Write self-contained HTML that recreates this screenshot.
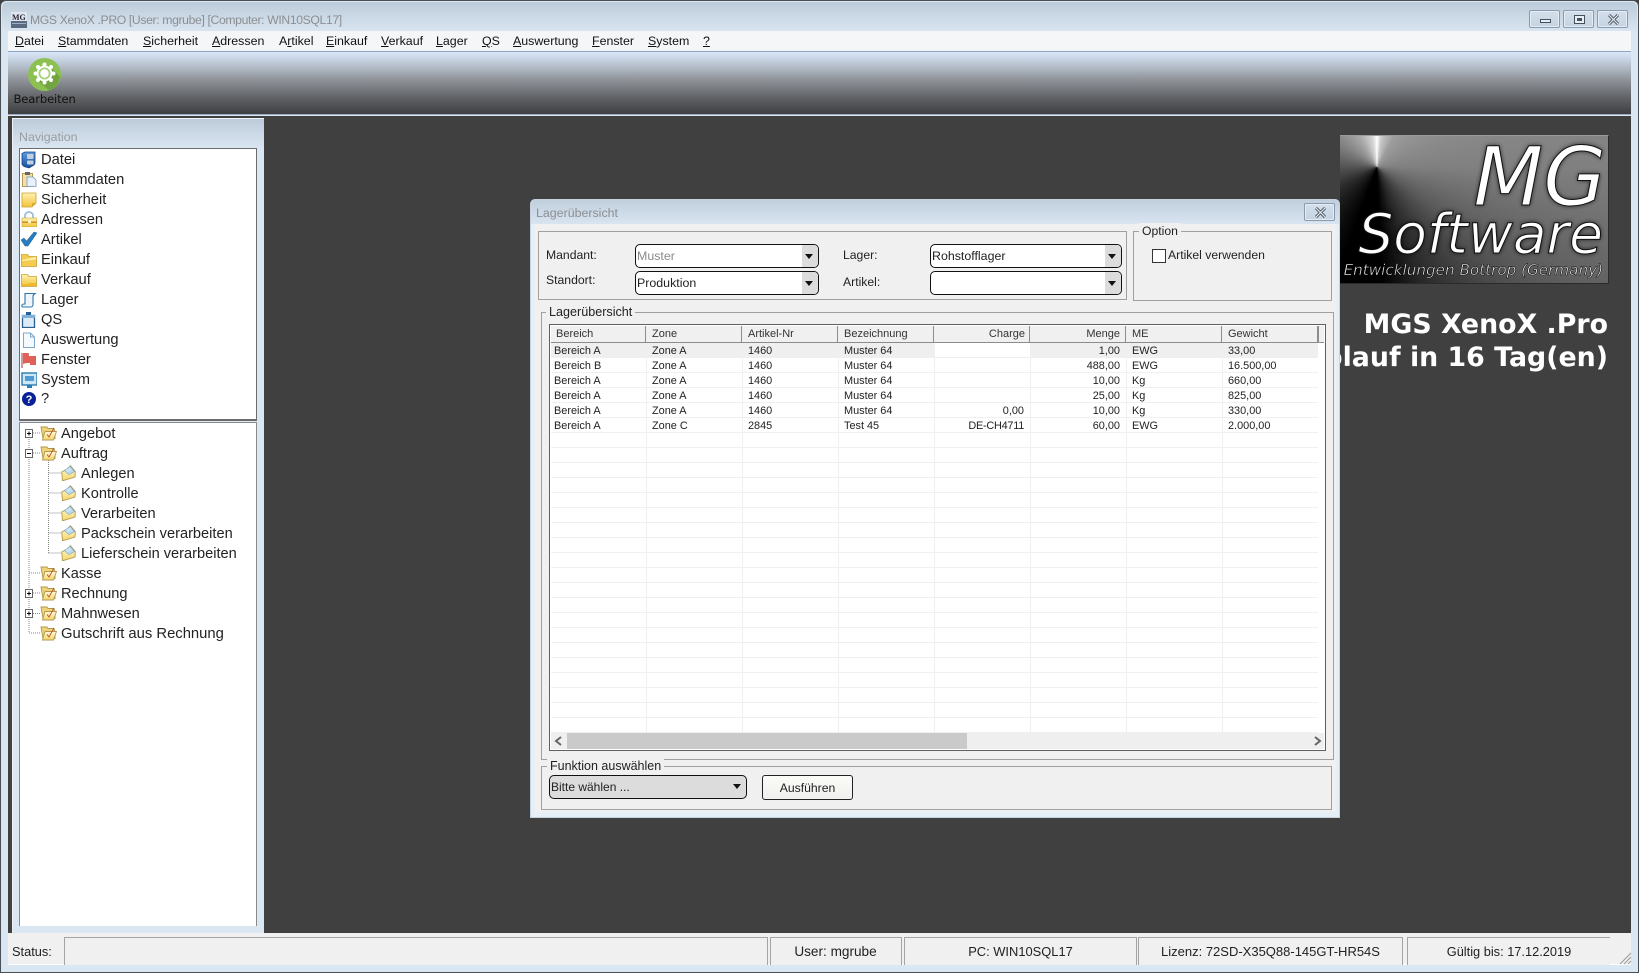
<!DOCTYPE html>
<html lang="de"><head><meta charset="utf-8"><title>MGS XenoX .PRO</title>
<style>
html,body{margin:0;padding:0;width:1639px;height:973px;overflow:hidden;background:#404040}
body{position:relative;font-family:"Liberation Sans",sans-serif;color:#111}
div,span,svg{position:absolute;box-sizing:border-box}
u{text-decoration:underline}
.t{white-space:nowrap;height:16px;line-height:16px}
.m{top:33px;font-size:12.4px}
.n{left:41px;font-size:14.7px;color:#222}
.g{font-size:10.9px;color:#222}
.h{top:326px;font-size:11px;color:#333}
.r{width:120px;text-align:right}
.l{font-size:12.2px;color:#222}
.gb{border:1px solid #a0a0a0;border-width:2px 2px 2px 2px}
.combo{background:#fff;border:1.5px solid #111;border-radius:5px;height:24px}
.combo .b{right:0;top:0;bottom:0;width:16px;background:#dcdcdc;border-radius:0 4px 4px 0}
.combo .a{right:5px;top:9px;width:0;height:0;border:4px solid transparent;border-top:5px solid #111;border-bottom:0}
.combo .v{left:1px;top:3px;font-size:12.4px;white-space:nowrap;line-height:16px;color:#222}
.wb{border:1px solid #8a9bad;border-radius:2px;background:linear-gradient(#d3dfeb,#c5d3e1);box-shadow:inset 0 0 0 1px #e4edf5}
.sb{top:937px;height:28px;background:#f0f0f0;border-left:1.5px solid #a4a4a4;border-top:1.5px solid #a4a4a4;border-right:1.5px solid #a4a4a4;font-size:12.8px;line-height:28px;text-align:center;color:#222;white-space:nowrap}
.ic{left:21px;width:16px;height:16px}
.fo{left:40px;width:17px;height:16px}
.ch{left:61px;width:15px;height:16px}
.tr{font-size:14.6px;color:#222}
</style></head>
<body>
<svg width="0" height="0" style="left:0;top:0">
<defs>
<linearGradient id="y" x1="0" y1="0" x2="0" y2="1"><stop offset="0" stop-color="#fff2b0"/><stop offset="1" stop-color="#f2c23c"/></linearGradient>
<linearGradient id="yp" x1="0" y1="0" x2="0" y2="1"><stop offset="0" stop-color="#fffbdc"/><stop offset="1" stop-color="#f6d566"/></linearGradient>
<linearGradient id="bl" x1="0" y1="0" x2="1" y2="1"><stop offset="0" stop-color="#eef6fc"/><stop offset="1" stop-color="#a5cbe8"/></linearGradient>
<linearGradient id="sh" x1="0" y1="0" x2="0" y2="1"><stop offset="0" stop-color="#5d9be0"/><stop offset="1" stop-color="#174f9e"/></linearGradient>
<symbol id="fold" viewBox="0 0 17 16"><path d="M1 2h6l1 1.500h6l1 3v7H3z" fill="#efd27a" stroke="#b09a50" stroke-width=".9"/><path d="M2.500 15l2.500-8.500h11.500L13.500 15z" fill="url(#yp)" stroke="#b09a50" stroke-width=".9"/><path d="M7 9.500l2 2.500 5-9" fill="none" stroke="#c04a30" stroke-width=".9"/></symbol>
<symbol id="mail" viewBox="0 0 15 16"><path d="M.700 7L6 4 9.500.8 14.300 6.500 14 12 1.500 15.800z" fill="url(#yp)" stroke="#b09a50" stroke-width=".9"/><path d="M3.500 5.500L9.300 1.500l4.200 5-5.500 3z" fill="url(#bl)" stroke="#7aa6c9" stroke-width=".7"/></symbol>
</defs></svg>

<!-- window frame -->
<div style="left:0;top:0;width:1639px;height:973px;background:#dae6f2;border:1.500px solid #4a4f55;border-radius:6px 6px 0 0"></div>
<div style="left:2px;top:2px;width:1635px;height:29px;background:linear-gradient(#bdccda,#d8e4f0);border-radius:5px 5px 0 0"></div>

<!-- title -->
<svg style="left:11px;top:12px" width="16" height="16" viewBox="0 0 16 16"><rect width="16" height="16" fill="#dfe6ee"/><rect y="9" width="16" height="7" fill="#5a6b80"/><rect x="1" y="11" width="14" height="1" fill="#9fb1c4"/><text x="1" y="8" font-size="8" font-weight="bold" font-family="Liberation Serif" fill="#223">MG</text></svg>
<div class="t" style="left:30px;top:12px;font-size:12.2px;letter-spacing:-.36px;color:#8c8f92">MGS XenoX .PRO [User: mgrube] [Computer: WIN10SQL17]</div>
<div class="wb" style="left:1529px;top:10px;width:31px;height:18px"><span style="left:10px;top:8px;width:11px;height:4px;border:1px solid #44505c;background:#e8eef4"></span></div>
<div class="wb" style="left:1563px;top:10px;width:31px;height:18px"><span style="left:10px;top:4px;width:11px;height:9px;border:1px solid #44505c;background:#e8eef4"></span><span style="left:13px;top:7px;width:5px;height:3px;background:#44505c"></span></div>
<div class="wb" style="left:1597px;top:10px;width:31px;height:18px"><svg style="left:9px;top:3px" width="13" height="11" viewBox="0 0 13 11"><path d="M2 1l9 9M11 1l-9 9" stroke="#44505c" stroke-width="3"/><path d="M2 1l9 9M11 1l-9 9" stroke="#e8eef4" stroke-width="1.200"/></svg></div>

<!-- menu -->
<div style="left:8px;top:31px;width:1623px;height:21px;background:#f5f6f7;border-bottom:1.500px solid #8ea6c4"></div>
<div class="t m" style="left:15px"><u>D</u>atei</div>
<div class="t m" style="left:58px"><u>S</u>tammdaten</div>
<div class="t m" style="left:143px"><u>S</u>icherheit</div>
<div class="t m" style="left:212px"><u>A</u>dressen</div>
<div class="t m" style="left:279px">A<u>r</u>tikel</div>
<div class="t m" style="left:326px"><u>E</u>inkauf</div>
<div class="t m" style="left:381px"><u>V</u>erkauf</div>
<div class="t m" style="left:436px"><u>L</u>ager</div>
<div class="t m" style="left:482px"><u>Q</u>S</div>
<div class="t m" style="left:513px"><u>A</u>uswertung</div>
<div class="t m" style="left:592px"><u>F</u>enster</div>
<div class="t m" style="left:648px"><u>S</u>ystem</div>
<div class="t m" style="left:703px"><u>?</u></div>

<!-- toolbar -->
<div style="left:8px;top:52px;width:1623px;height:63px;background:linear-gradient(#d9e7f8 0,#c4d0de 14%,#8f9399 45%,#5e6063 75%,#3e3f41 100%);border-bottom:1.500px solid #9aaac0"></div>
<svg style="left:27px;top:57px" width="35" height="35" viewBox="0 0 35 35">
<circle cx="17.500" cy="17.500" r="16.500" fill="#8cc152"/>
<path d="M24 10L33 20A16.500 16.500 0 0 1 22 33.400L11 24z" fill="#72a53f"/>
<g fill="#fff"><circle cx="17.500" cy="16.500" r="8"/><circle cx="17.500" cy="7.500" r="2"/><circle cx="17.500" cy="25.500" r="2"/><circle cx="8.500" cy="16.500" r="2"/><circle cx="26.500" cy="16.500" r="2"/><circle cx="11" cy="10" r="2"/><circle cx="24" cy="10" r="2"/><circle cx="11" cy="23" r="2"/><circle cx="24" cy="23" r="2"/></g>
<circle cx="17.500" cy="16.500" r="6" fill="#a9d07a"/><circle cx="17.500" cy="16.500" r="4.200" fill="#fff"/>
</svg>
<div class="t" style="left:13.500px;top:91px;font-size:11.6px;font-family:'DejaVu Sans',sans-serif;color:#111;letter-spacing:-.15px">Bearbeiten</div>

<!-- main dark area -->
<div style="left:8px;top:116px;width:1623px;height:817px;background:#404040"></div>

<!-- nav panel -->
<div style="left:12px;top:118px;width:252px;height:815px;background:#dae6f2;border-top:1px solid #eef3f8;border-left:1px solid #eef3f8"></div>
<div style="left:13px;top:119px;width:251px;height:30px;background:linear-gradient(#bccbd9,#dae6f2)"></div>
<div class="t" style="left:19px;top:129px;font-size:12.4px;color:#9a9da0">Navigation</div>
<div style="left:19px;top:148px;width:238px;height:273px;background:#fff;border:1.500px solid #6c6c6c;border-bottom-width:2px"></div>
<div style="left:19px;top:422px;width:238px;height:504px;background:#fff;border:1.500px solid #8a8a8a;border-bottom:0"></div>

<!-- nav icons -->
<svg class="ic" style="top:151px;height:18px" viewBox="0 0 16 18"><path d="M1 2.500L4 1h10v11l-1 2-5 3-5-1.500-2-2z" fill="url(#sh)" stroke="#12427e" stroke-width=".8"/><rect x="6" y="3" width="6.500" height="5" rx="1" fill="#c4cfdc"/><rect x="6" y="9.500" width="6.500" height="4" rx="1" fill="#c4cfdc"/></svg>
<svg class="ic" style="top:171px" viewBox="0 0 16 16"><rect x="1.500" y="2.500" width="10" height="13" fill="#f3dfa8" stroke="#b69a55"/><rect x="4" y="1" width="5" height="3" fill="#666"/><path d="M6 6h6l3 3v6.500H6z" fill="#e8f1fb" stroke="#6f9cc4" stroke-width=".8"/></svg>
<svg class="ic" style="top:192px" viewBox="0 0 16 16"><path d="M1 1h14v10l-4 4H1z" fill="url(#y)" stroke="#c9a236" stroke-width=".8"/><path d="M11 15v-4h4z" fill="#d9ab2d"/></svg>
<svg class="ic" style="top:211px" viewBox="0 0 16 16"><path d="M4 7V4.500a4 3.500 0 0 1 8 0V7" fill="none" stroke="#9dc0dd" stroke-width="1.800"/><rect x="1" y="7" width="15" height="9" fill="url(#y)" stroke="#c9a236" stroke-width=".6"/><rect x="1" y="10.500" width="15" height="1.500" fill="#c9901c"/><rect x="7" y="9" width="3" height="3" fill="#fff3c0"/></svg>
<svg class="ic" style="top:231px" viewBox="0 0 16 16"><path d="M0 9l3-2 2.500 3L13 1l3 1-9 13H4z" fill="#2a7cc0" stroke="#175a93" stroke-width=".5"/></svg>
<svg class="ic" style="top:252px" viewBox="0 0 16 16"><path d="M.500 2.500h6l1.500 2h7.500v10H.500z" fill="#f5cc4e" stroke="#c9a236" stroke-width=".8"/><path d="M1 8l14-3v2.500L1 9z" fill="#fff1b0"/></svg>
<svg class="ic" style="top:272px" viewBox="0 0 16 16"><path d="M.500 2.500h6l1.500 2h7.500v10H.500z" fill="url(#y)" stroke="#c9a236" stroke-width=".8"/><path d="M1 12h6l2-1h6v3H1z" fill="#eeb92f"/></svg>
<svg class="ic" style="top:292px" viewBox="0 0 16 16"><path d="M4 1.500h10c-1.500 1-2 2-2 3v8c0 1.500-1 2.500-2 2.500H2c-1 0-1.500-1-1-2s1-1 2-1h1V3c0-1 0-1.500 0-1.500z" fill="#eef5fb" stroke="#2f74ad" stroke-width="1.100"/></svg>
<svg class="ic" style="top:312px" viewBox="0 0 16 16"><rect x="1.500" y="3.500" width="12" height="12" fill="#dcebf7" stroke="#2a5f8f" stroke-width="1.300"/><rect x="1" y="3" width="13" height="3" fill="#7fb0d8"/><rect x="5" y="0" width="5" height="3" fill="#2a5f8f"/></svg>
<svg class="ic" style="top:332px" viewBox="0 0 16 16"><path d="M2.500 1h7l4 4v10.500h-11z" fill="#f4f9fe" stroke="#7ea7c9"/><path d="M9.500 1v4h4" fill="none" stroke="#7ea7c9"/></svg>
<svg class="ic" style="top:352px" viewBox="0 0 16 16"><path d="M1 1v15" stroke="#a33" stroke-width="1"/><path d="M2 1h5c1 0 1 1 1 3h7v9H9v-2H7c-1 0-2 0-5 1z" fill="#e0605a"/></svg>
<svg class="ic" style="top:372px" viewBox="0 0 16 16"><rect x="1" y="1" width="15" height="12" fill="#cfe6f6" stroke="#2a7cb0" stroke-width="1.400"/><rect x="4" y="4" width="9" height="5" fill="#4f9bd3"/><rect x="6" y="13" width="5" height="3" fill="#2a7cb0"/></svg>
<svg class="ic" style="top:391px" viewBox="0 0 16 16"><circle cx="8" cy="8" r="7" fill="#0a1f9a"/><text x="8" y="12" font-size="11" font-weight="bold" text-anchor="middle" font-family="Liberation Sans" fill="#fff">?</text></svg>

<!-- nav text -->
<div class="t n" style="top:152px">Datei</div>
<div class="t n" style="top:172px">Stammdaten</div>
<div class="t n" style="top:192px">Sicherheit</div>
<div class="t n" style="top:212px">Adressen</div>
<div class="t n" style="top:232px">Artikel</div>
<div class="t n" style="top:252px">Einkauf</div>
<div class="t n" style="top:272px">Verkauf</div>
<div class="t n" style="top:292px">Lager</div>
<div class="t n" style="top:312px">QS</div>
<div class="t n" style="top:332px">Auswertung</div>
<div class="t n" style="top:352px">Fenster</div>
<div class="t n" style="top:372px">System</div>
<div class="t n" style="top:391px">?</div>

<!-- tree -->
<svg style="left:20px;top:422px" width="60" height="230" viewBox="0 0 60 230" fill="none" stroke="#888" stroke-width="1" stroke-dasharray="1 1">
<path d="M9 15V211M9 11H20M9 31H20M9 151H20M9 171H20M9 191.500H20M9 211H20"/>
<path d="M28.500 38V131M28.500 51H41M28.500 71H41M28.500 91H41M28.500 111H41M28.500 131H41"/>
</svg>
<svg style="left:25px;top:429px" width="8" height="9"><rect x=".5" y=".5" width="7" height="8" fill="#fff" stroke="#666"/><path d="M2 4.500h4M4 2.500v4" stroke="#000"/></svg>
<svg style="left:25px;top:449px" width="8" height="9"><rect x=".5" y=".5" width="7" height="8" fill="#fff" stroke="#666"/><path d="M2 4.500h4" stroke="#000"/></svg>
<svg style="left:25px;top:589px" width="8" height="9"><rect x=".5" y=".5" width="7" height="8" fill="#fff" stroke="#666"/><path d="M2 4.500h4M4 2.500v4" stroke="#000"/></svg>
<svg style="left:25px;top:609px" width="8" height="9"><rect x=".5" y=".5" width="7" height="8" fill="#fff" stroke="#666"/><path d="M2 4.500h4M4 2.500v4" stroke="#000"/></svg>

<svg class="fo" style="top:425px"><use href="#fold"/></svg>
<svg class="fo" style="top:445px"><use href="#fold"/></svg>
<svg class="fo" style="top:565px"><use href="#fold"/></svg>
<svg class="fo" style="top:585px"><use href="#fold"/></svg>
<svg class="fo" style="top:605px"><use href="#fold"/></svg>
<svg class="fo" style="top:625px"><use href="#fold"/></svg>
<svg class="ch" style="top:465px"><use href="#mail"/></svg>
<svg class="ch" style="top:485px"><use href="#mail"/></svg>
<svg class="ch" style="top:505px"><use href="#mail"/></svg>
<svg class="ch" style="top:525px"><use href="#mail"/></svg>
<svg class="ch" style="top:545px"><use href="#mail"/></svg>

<div class="t tr" style="left:61px;top:426px">Angebot</div>
<div class="t tr" style="left:61px;top:446px">Auftrag</div>
<div class="t tr" style="left:81px;top:466px">Anlegen</div>
<div class="t tr" style="left:81px;top:486px">Kontrolle</div>
<div class="t tr" style="left:81px;top:506px">Verarbeiten</div>
<div class="t tr" style="left:81px;top:526px">Packschein verarbeiten</div>
<div class="t tr" style="left:81px;top:546px">Lieferschein verarbeiten</div>
<div class="t tr" style="left:61px;top:566px">Kasse</div>
<div class="t tr" style="left:61px;top:586px">Rechnung</div>
<div class="t tr" style="left:61px;top:606px">Mahnwesen</div>
<div class="t tr" style="left:61px;top:626px;font-size:14.8px">Gutschrift aus Rechnung</div>

<!-- logo -->
<div style="left:1340px;top:135px;width:269px;height:149px;overflow:hidden;border-top:1px solid #9a9a9a;border-bottom:1px solid #2a2a2a;border-right:1px solid #2c2c2c;background:conic-gradient(from 0deg at 37px 31px,#fff 0deg,#c8c8c8 8deg,#9c9c9c 30deg,#808080 90deg,#5a5a5a 125deg,#262626 160deg,#000 178deg,#000 200deg,#2a2a2a 240deg,#707070 290deg,#a8a8a8 330deg,#d8d8d8 352deg,#fff 360deg)">
<svg style="left:-1px;top:-1px" width="270" height="149" viewBox="0 0 270 149">
<defs><filter id="gl" x="-10%" y="-20%" width="120%" height="140%"><feGaussianBlur stdDeviation="2.500"/></filter></defs>
<g font-family="DejaVu Sans" font-style="oblique" text-anchor="end">
<g filter="url(#gl)" fill="#000" opacity=".8"><text x="267" y="70" font-size="81">MG</text><text x="264" y="118" font-size="55">Software</text></g>
<text x="267" y="70" font-size="81" fill="#fff" stroke="#111" stroke-width="1">MG</text>
<text x="264" y="118" font-size="55" fill="#fff" stroke="#111" stroke-width="1">Software</text>
<text x="264" y="140" font-size="15.200" fill="#e8e8e8" stroke="#000" stroke-width=".5">Entwicklungen Bottrop (Germany)</text>
</g></svg>
</div>
<div class="t" style="left:1200px;width:408px;top:309px;height:32px;line-height:32px;text-align:right;font:bold 26.800px/32px 'DejaVu Sans',sans-serif;color:#fff">MGS XenoX .Pro</div>
<div class="t" style="left:1200px;width:408px;top:342px;height:32px;text-align:right;font:bold 26.800px/32px 'DejaVu Sans',sans-serif;color:#fff">Ablauf in 16 Tag(en)</div>

<!-- dialog -->
<div style="left:530px;top:199px;width:810px;height:619px;background:#e6eef6;border-radius:5px 5px 0 0;border:1px solid #c6d2de"></div>
<div style="left:531px;top:200px;width:808px;height:24px;background:linear-gradient(#c0cedc,#d8e4f0);border-radius:4px 4px 0 0"></div>
<div style="left:535px;top:224px;width:801px;height:588px;background:#f0f0f0"></div>
<div class="t" style="left:536px;top:205px;font-size:12.4px;color:#8c8f92">Lagerübersicht</div>
<div class="wb" style="left:1304px;top:203px;width:31px;height:18px"><svg style="left:9px;top:3px" width="13" height="11" viewBox="0 0 13 11"><path d="M2 1l9 9M11 1l-9 9" stroke="#44505c" stroke-width="3"/><path d="M2 1l9 9M11 1l-9 9" stroke="#e8eef4" stroke-width="1.200"/></svg></div>

<!-- filter box -->
<div class="gb" style="left:538px;top:231px;width:589px;height:69px;border-width:1.500px"></div>
<div class="t l" style="left:546px;top:247px">Mandant:</div>
<div class="t l" style="left:546px;top:272px">Standort:</div>
<div class="t l" style="left:843px;top:247px">Lager:</div>
<div class="t l" style="left:843px;top:274px">Artikel:</div>
<div class="combo" style="left:635px;top:243.500px;width:184px"><span class="b"></span><span class="a"></span><span class="v" style="color:#8a8a8a">Muster</span></div>
<div class="combo" style="left:635px;top:270.500px;width:184px"><span class="b"></span><span class="a"></span><span class="v">Produktion</span></div>
<div class="combo" style="left:930px;top:243.500px;width:192px"><span class="b"></span><span class="a"></span><span class="v">Rohstofflager</span></div>
<div class="combo" style="left:930px;top:270.500px;width:192px"><span class="b"></span><span class="a"></span></div>

<!-- option -->
<div class="gb" style="left:1133px;top:231px;width:199px;height:70px;border-width:1.500px"></div>
<div class="t l" style="left:1139px;top:223px;background:#f0f0f0;padding:0 3px">Option</div>
<div style="left:1152px;top:248.500px;width:14px;height:14px;background:#fff;border:1.500px solid #333"></div>
<div class="t l" style="left:1168px;top:247px">Artikel verwenden</div>

<!-- list group -->
<div class="gb" style="left:541px;top:312px;width:793px;height:448px;border-width:1.500px"></div>
<div class="t l" style="left:546px;top:304px;background:#f0f0f0;padding:0 3px;font-size:12.6px">Lagerübersicht</div>

<!-- grid -->
<div style="left:549px;top:324px;width:777px;height:427px;background:#fff;border:1.500px solid #606060"></div>
<div style="left:551px;top:343px;width:767px;height:390px;background-image:repeating-linear-gradient(to bottom,transparent 0,transparent 14px,#f0f0f0 14px,#f0f0f0 15px),repeating-linear-gradient(to right,transparent 0,transparent 95px,#f0f0f0 95px,#f0f0f0 96px)"></div>
<div style="left:551px;top:343px;width:383px;height:15px;background:#efefef"></div>
<div style="left:1030px;top:343px;width:288px;height:15px;background:#efefef"></div>

<div style="left:551px;top:325.500px;width:773px;height:17px;background:#f0f0f0;border-bottom:1.500px solid #8c8c8c"></div>
<div style="left:644.500px;top:325.500px;width:1.500px;height:17px;background:#8c8c8c"></div>
<div style="left:740.500px;top:325.500px;width:1.500px;height:17px;background:#8c8c8c"></div>
<div style="left:836.500px;top:325.500px;width:1.500px;height:17px;background:#8c8c8c"></div>
<div style="left:932.500px;top:325.500px;width:1.500px;height:17px;background:#8c8c8c"></div>
<div style="left:1028.500px;top:325.500px;width:1.500px;height:17px;background:#8c8c8c"></div>
<div style="left:1124.500px;top:325.500px;width:1.500px;height:17px;background:#8c8c8c"></div>
<div style="left:1220.500px;top:325.500px;width:1.500px;height:17px;background:#8c8c8c"></div>
<div style="left:1317px;top:325.500px;width:1.500px;height:17px;background:#8c8c8c"></div>

<div class="t h" style="left:556px">Bereich</div>
<div class="t h" style="left:652px">Zone</div>
<div class="t h" style="left:748px">Artikel-Nr</div>
<div class="t h" style="left:844px">Bezeichnung</div>
<div class="t h r" style="left:905px;width:120px">Charge</div>
<div class="t h r" style="left:1000px">Menge</div>
<div class="t h" style="left:1132px">ME</div>
<div class="t h" style="left:1228px">Gewicht</div>

<div class="t g" style="left:554px;top:343px">Bereich A</div><div class="t g" style="left:652px;top:343px">Zone A</div><div class="t g" style="left:748px;top:343px">1460</div><div class="t g" style="left:844px;top:343px">Muster 64</div><div class="t g r" style="left:1000px;top:343px">1,00</div><div class="t g" style="left:1132px;top:343px">EWG</div><div class="t g" style="left:1228px;top:343px">33,00</div>
<div class="t g" style="left:554px;top:358px">Bereich B</div><div class="t g" style="left:652px;top:358px">Zone A</div><div class="t g" style="left:748px;top:358px">1460</div><div class="t g" style="left:844px;top:358px">Muster 64</div><div class="t g r" style="left:1000px;top:358px">488,00</div><div class="t g" style="left:1132px;top:358px">EWG</div><div class="t g" style="left:1228px;top:358px">16.500,00</div>
<div class="t g" style="left:554px;top:373px">Bereich A</div><div class="t g" style="left:652px;top:373px">Zone A</div><div class="t g" style="left:748px;top:373px">1460</div><div class="t g" style="left:844px;top:373px">Muster 64</div><div class="t g r" style="left:1000px;top:373px">10,00</div><div class="t g" style="left:1132px;top:373px">Kg</div><div class="t g" style="left:1228px;top:373px">660,00</div>
<div class="t g" style="left:554px;top:388px">Bereich A</div><div class="t g" style="left:652px;top:388px">Zone A</div><div class="t g" style="left:748px;top:388px">1460</div><div class="t g" style="left:844px;top:388px">Muster 64</div><div class="t g r" style="left:1000px;top:388px">25,00</div><div class="t g" style="left:1132px;top:388px">Kg</div><div class="t g" style="left:1228px;top:388px">825,00</div>
<div class="t g" style="left:554px;top:403px">Bereich A</div><div class="t g" style="left:652px;top:403px">Zone A</div><div class="t g" style="left:748px;top:403px">1460</div><div class="t g" style="left:844px;top:403px">Muster 64</div><div class="t g r" style="left:904px;top:403px">0,00</div><div class="t g r" style="left:1000px;top:403px">10,00</div><div class="t g" style="left:1132px;top:403px">Kg</div><div class="t g" style="left:1228px;top:403px">330,00</div>
<div class="t g" style="left:554px;top:418px">Bereich A</div><div class="t g" style="left:652px;top:418px">Zone C</div><div class="t g" style="left:748px;top:418px">2845</div><div class="t g" style="left:844px;top:418px">Test 45</div><div class="t g r" style="left:904px;top:418px;letter-spacing:-.25px">DE-CH4711</div><div class="t g r" style="left:1000px;top:418px">60,00</div><div class="t g" style="left:1132px;top:418px">EWG</div><div class="t g" style="left:1228px;top:418px">2.000,00</div>

<!-- scrollbar -->
<div style="left:551px;top:733px;width:773px;height:16px;background:#efefef"></div>
<div style="left:567px;top:733px;width:400px;height:16px;background:#cacaca"></div>
<svg style="left:554px;top:736px" width="9" height="10" viewBox="0 0 9 10"><path d="M7 1L2 5l5 4" fill="none" stroke="#666" stroke-width="2"/></svg>
<svg style="left:1313px;top:736px" width="9" height="10" viewBox="0 0 9 10"><path d="M2 1l5 4-5 4" fill="none" stroke="#666" stroke-width="2"/></svg>

<!-- function -->
<div class="gb" style="left:541px;top:765.500px;width:791px;height:44px;border-width:1.500px"></div>
<div class="t l" style="left:547px;top:758px;background:#f0f0f0;padding:0 3px;font-size:12.5px">Funktion auswählen</div>
<div class="combo" style="left:549px;top:775px;width:198px;background:#dcdcdc"><span class="a" style="right:5px;top:8px"></span><span class="v" style="top:3px;font-size:12px">Bitte wählen ...</span></div>
<div style="left:762px;top:775px;width:91px;height:25px;background:linear-gradient(#fbfbf8,#f0f0ee);border:1.500px solid #222;border-radius:3px;font-size:12.2px;line-height:24px;text-align:center;color:#222">Ausführen</div>

<!-- status bar -->
<div style="left:8px;top:933px;width:1623px;height:32px;background:#f0f0f0;border-bottom:1px solid #fff"></div>
<div class="t" style="left:12px;top:944px;font-size:12.8px;color:#222">Status:</div>
<div class="sb" style="left:64px;width:704px"></div>
<div class="sb" style="left:770px;width:132px;font-size:13.6px;padding-right:1px">User: mgrube</div>
<div class="sb" style="left:904px;width:233px;font-size:12.9px">PC: WIN10SQL17</div>
<div class="sb" style="left:1138px;width:265px;font-size:13px">Lizenz: 72SD-X35Q88-145GT-HR54S</div>
<div class="sb" style="left:1407px;width:203px;border-right:0">Gültig bis: 17.12.2019</div>
<svg style="left:1619px;top:952px" width="13" height="13" viewBox="0 0 13 13"><path d="M12 1L1 12M12 5L5 12M12 9L9 12" stroke="#9a9a9a" stroke-width="1"/></svg>
</body></html>
